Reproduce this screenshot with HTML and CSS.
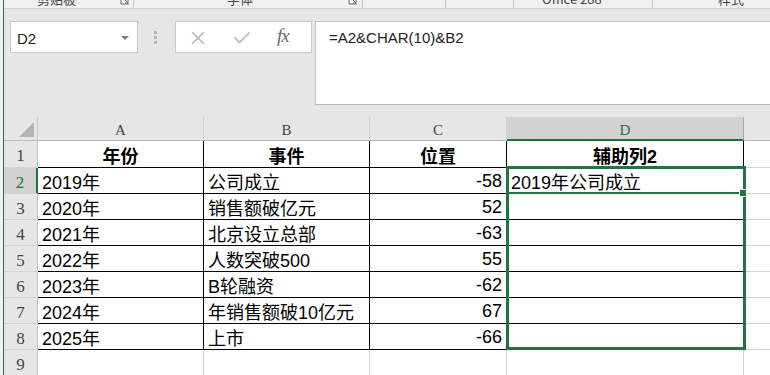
FILE: index.html
```html
<!DOCTYPE html>
<html lang="zh-CN">
<head>
<meta charset="utf-8">
<title>Excel</title>
<link rel="stylesheet" href="styles.css">
</head>
<body>
<div class="app">
  <div class="ribbon">
    <div class="grp g1"><span class="lbl">剪贴板</span><span class="launch"><svg width="10" height="10" viewBox="0 0 10 10"><path d="M1 1v8h8" fill="none" stroke="#6a6a6a" stroke-width="1"/><path d="M3 3l5 5M8 5v3H5" fill="none" stroke="#6a6a6a" stroke-width="1"/></svg></span></div>
    <div class="grp g2"><span class="lbl">字体</span><span class="launch"><svg width="10" height="10" viewBox="0 0 10 10"><path d="M1 1v8h8" fill="none" stroke="#6a6a6a" stroke-width="1"/><path d="M3 3l5 5M8 5v3H5" fill="none" stroke="#6a6a6a" stroke-width="1"/></svg></span></div>
    <div class="grp g3"></div>
    <div class="grp g4"></div>
    <div class="grp g5"><span class="lbl">Office 288</span></div>
    <div class="grp g6"><span class="lbl">样式</span></div>
  </div>

  <div class="fbar">
    <div class="namebox"><span class="ref">D2</span><span class="caret"></span></div>
    <div class="grip"><i></i><i></i><i></i></div>
    <div class="btns">
      <svg class="ico-x" width="16" height="14" viewBox="0 0 16 14"><path d="M2 1l12 12M14 1L2 13" stroke="#b9b9b9" stroke-width="1.6" fill="none"/></svg>
      <svg class="ico-ok" width="18" height="13" viewBox="0 0 18 13"><path d="M1.5 6.5l5 5L16.5 1.5" stroke="#c4c4c4" stroke-width="2" fill="none"/></svg>
      <span class="fx">fx</span>
    </div>
    <div class="formula">=A2&amp;CHAR(10)&amp;B2</div>
  </div>

  <div class="sheet">
    <div class="grid">
      <div class="corner"><span class="tri"></span></div>
      <div class="ch">A</div>
      <div class="ch">B</div>
      <div class="ch">C</div>
      <div class="ch sel-h">D</div>
      <div class="ch"></div>

      <div class="rh">1</div>
      <div class="c t h">年份</div>
      <div class="c t h">事件</div>
      <div class="c t h">位置</div>
      <div class="c t h">辅助列2</div>
      <div class="c"></div>

      <div class="rh sel-r">2</div>
      <div class="c t">2019年</div>
      <div class="c t">公司成立</div>
      <div class="c t r">-58</div>
      <div class="c t">2019年公司成立</div>
      <div class="c"></div>

      <div class="rh">3</div>
      <div class="c t">2020年</div>
      <div class="c t">销售额破亿元</div>
      <div class="c t r">52</div>
      <div class="c t"></div>
      <div class="c"></div>

      <div class="rh">4</div>
      <div class="c t">2021年</div>
      <div class="c t">北京设立总部</div>
      <div class="c t r">-63</div>
      <div class="c t"></div>
      <div class="c"></div>

      <div class="rh">5</div>
      <div class="c t">2022年</div>
      <div class="c t">人数突破500</div>
      <div class="c t r">55</div>
      <div class="c t"></div>
      <div class="c"></div>

      <div class="rh">6</div>
      <div class="c t">2023年</div>
      <div class="c t">B轮融资</div>
      <div class="c t r">-62</div>
      <div class="c t"></div>
      <div class="c"></div>

      <div class="rh">7</div>
      <div class="c t">2024年</div>
      <div class="c t">年销售额破10亿元</div>
      <div class="c t r">67</div>
      <div class="c t"></div>
      <div class="c"></div>

      <div class="rh">8</div>
      <div class="c t">2025年</div>
      <div class="c t">上市</div>
      <div class="c t r">-66</div>
      <div class="c t"></div>
      <div class="c"></div>

      <div class="rh">9</div>
      <div class="c"></div>
      <div class="c"></div>
      <div class="c"></div>
      <div class="c"></div>
      <div class="c"></div>
    </div>
    <div class="selbox"></div>
    <div class="activeline"></div>
    <div class="handle"></div>
  </div>
</div>
</body>
</html>
```

FILE: styles.css
```css
* { box-sizing: border-box; }
html, body { margin: 0; padding: 0; }
body {
  background: #f1f1f1;
  width: 770px;
  height: 375px;
  overflow: hidden;
  font-family: "Liberation Sans", "Noto Sans CJK SC", sans-serif;
}
.app {
  margin-left: 3px;
  border-left: 1px solid #2e6846;
  height: 375px;
  overflow: hidden;
  background: #e6e6e6;
}

/* ribbon strip (cut off) */
.ribbon {
  display: flex;
  height: 9px;
  background: #f1f1f1;
  border-bottom: 1px solid #d2d2d2;
  overflow: hidden;
}
.grp {
  display: flex;
  align-items: flex-end;
  height: 8px;
  border-right: 1px solid #c8c8c8;
  flex: none;
}
.lbl {
  font-family: "Noto Sans CJK SC", "Liberation Sans", sans-serif;
  font-size: 13px;
  line-height: 14px;
  color: #444;
  margin-bottom: 2px;
  white-space: nowrap;
}
.launch { display: flex; margin-bottom: 3px; }
.g1 { width: 130px; padding-left: 33px; }
.g1 .lbl { width: 83px; }
.g2 { width: 229px; padding-left: 93px; }
.g2 .lbl { width: 121px; }
.g3 { width: 83px; }
.g4 { width: 68px; }
.g5 { width: 139px; padding-left: 28px; }
.g6 { flex: 1; padding-left: 65px; border-right: 0; }

/* formula bar */
.fbar {
  display: flex;
  align-items: flex-start;
  height: 108px;
  padding: 12px 0 0 6px;
  background: #e6e6e6;
}
.namebox {
  width: 128px;
  height: 32px;
  background: #fff;
  border: 1px solid #c9c9c9;
  display: flex;
  align-items: center;
  justify-content: space-between;
  padding: 2px 8px 0 6px;
}
.ref { font-size: 15px; color: #222; }
.caret {
  width: 0; height: 0;
  border-left: 4px solid transparent;
  border-right: 4px solid transparent;
  border-top: 4px solid #7b7b7b;
}
.grip {
  display: flex;
  flex-direction: column;
  gap: 2px;
  margin: 10px 18px 0 16px;
}
.grip i { display: block; width: 3px; height: 3px; background: #b4b4b4; }
.btns {
  width: 137px;
  height: 32px;
  background: #fff;
  border: 1px solid #c9c9c9;
  display: flex;
  align-items: center;
  padding: 1px 0 0 14px;
}
.ico-x { margin-right: 27px; }
.ico-ok { margin-right: 26px; }
.fx {
  font-family: "Liberation Serif", "DejaVu Serif", serif;
  font-style: italic;
  font-size: 19px;
  color: #6a6a6a;
  letter-spacing: -1px;
  margin-top: -3px;
}
.formula {
  flex: 1;
  height: 84px;
  margin-left: 3px;
  margin-right: -6px;
  background: #fff;
  border: 1px solid #c6c6c6;
  border-bottom-color: #b8b8b8;
  padding: 7px 0 0 13px;
  font-size: 15px;
  line-height: 18px;
  color: #222;
}

/* sheet */
.sheet {
  position: relative;
  background: #fff;
}
.grid {
  display: grid;
  grid-template-columns: 34px 166px 166px 137px 237px 40px;
  grid-template-rows: 24px 27px repeat(8, 26px);
}
.corner {
  background: #e6e6e6;
  border-right: 1px solid #c6c6c6;
  border-bottom: 1px solid #bdbdbd;
  display: flex;
  justify-content: flex-end;
  align-items: flex-end;
  padding: 0 3px 3px 0;
}
.tri {
  width: 0; height: 0;
  border-left: 15px solid transparent;
  border-bottom: 15px solid #b6b6b6;
}
.ch {
  background: #e6e6e6;
  border-right: 1px solid #d0d0d0;
  border-bottom: 1px solid #bdbdbd;
  display: flex;
  align-items: center;
  justify-content: center;
  padding-top: 4px;
  font-family: "Liberation Serif", "DejaVu Serif", serif;
  font-size: 15px;
  color: #444;
}
.ch.sel-h {
  background: #d2d2d2;
  color: #217346;
  border-right-color: #ababab;
  border-bottom: 2px solid #217346;
}
.rh {
  background: #e6e6e6;
  border-right: 1px solid #c6c6c6;
  border-bottom: 1px solid #d4d4d4;
  display: flex;
  align-items: center;
  justify-content: center;
  padding: 4px 0 0 0;
  font-family: "Liberation Serif", "DejaVu Serif", serif;
  font-size: 17px;
  color: #444;
}
.rh.sel-r {
  background: #d2d2d2;
  color: #217346;
  border-right: 2px solid #217346;
}
.c {
  background: #fff;
  border-right: 1px solid #d4d4d4;
  border-bottom: 1px solid #d4d4d4;
  display: flex;
  align-items: center;
  padding: 1px 4px 0 4px;
  font-size: 18px;
  color: #000;
  white-space: nowrap;
  overflow: hidden;
}
.c.t { border-right-color: #000; border-bottom-color: #000; }
.c.r { justify-content: flex-end; }
.c.h { justify-content: center; font-weight: bold; }

/* selection overlays */
.selbox {
  position: absolute;
  left: 502px;
  top: 49px;
  width: 240px;
  height: 184px;
  border: 3px solid #217346;
}
.activeline {
  position: absolute;
  left: 502px;
  top: 75px;
  width: 234px;
  height: 2px;
  background: #217346;
}
.handle {
  position: absolute;
  left: 735px;
  top: 72px;
  width: 8px;
  height: 8px;
  background: #217346;
  border: 1px solid #fff;
}
```
